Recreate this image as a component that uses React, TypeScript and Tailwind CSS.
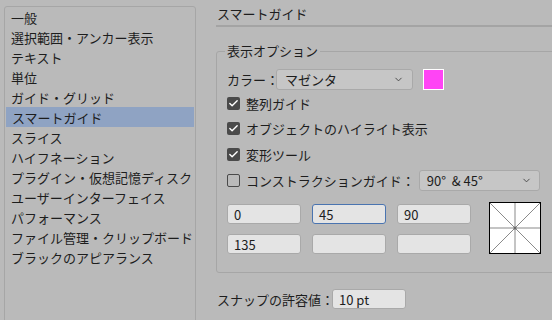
import { Check, ChevronDown } from "lucide-react";

const sections = [
  "一般",
  "選択範囲・アンカー表示",
  "テキスト",
  "単位",
  "ガイド・グリッド",
  "スマートガイド",
  "スライス",
  "ハイフネーション",
  "プラグイン・仮想記憶ディスク",
  "ユーザーインターフェイス",
  "パフォーマンス",
  "ファイル管理・クリップボード",
  "ブラックのアピアランス",
];

function Box({ checked }: { checked: boolean }) {
  return (
    <span
      className={`flex h-[13px] w-[13px] items-center justify-center rounded-[2px] ${
        checked ? "bg-[#4a4a4a]" : "border border-[#4a4a4a] bg-transparent"
      }`}
    >
      {checked && <Check size={11} strokeWidth={3} className="text-white" />}
    </span>
  );
}

function Field({ value, focused }: { value?: string; focused?: boolean }) {
  return (
    <div
      className={`flex h-[20px] w-[74px] items-center rounded-[3px] bg-[#e4e4e4] px-[6px] text-[13px] ${
        focused ? "border border-[#4a74b0]" : "border border-[#a9a9a9]"
      }`}
    >
      {value}
    </div>
  );
}

export default function App() {
  const font = { fontFamily: '"Noto Sans CJK JP", "Noto Sans", sans-serif' };
  return (
    <div
      className="flex h-[320px] w-[552px] overflow-hidden bg-[#bababa] text-[13px] leading-none text-[#1d1d1d]"
      style={font}
    >
      {/* sidebar list */}
      <div className="ml-[4px] mt-[6px] h-[330px] w-[192px] rounded-[3px] border border-[#a6a6a6]">
        {sections.map((s) => (
          <div
            key={s}
            className={`flex h-[20px] items-center pl-[6px] ${
              s === "スマートガイド" ? "mx-[1px] bg-[#8fa3c3] pl-[5px]" : ""
            }`}
          >
            {s}
          </div>
        ))}
      </div>

      <div className="ml-[20px] flex flex-1 flex-col">
        <div className="mt-[7px] border-b-2 border-[#a4a4a4] pb-[5px] pl-[1px]">スマートガイド</div>

        {/* display options group */}
        <div className="relative mt-[24px] -mr-[10px] h-[222px] rounded-[3px] border border-[#a6a6a6] pl-[10px] pt-[17px]">
          <span className="absolute -top-[8px] left-[8px] bg-[#bababa] px-[2px]">表示オプション</span>

          <div className="flex items-center">
            <span>カラー：</span>
            <div className="ml-[-3px] flex h-[21px] w-[137px] items-center justify-between rounded-[3px] border border-[#a9a9a9] bg-[#c6c6c6] pl-[8px] pr-[8px]">
              <span>マゼンタ</span>
              <ChevronDown size={11} strokeWidth={2} className="text-[#444]" />
            </div>
            <div className="ml-[10px] h-[21px] w-[21px] border-[1.5px] border-white bg-[#ff44f5]" />
          </div>

          <div className="mt-[7px] flex items-center gap-[6px]">
            <Box checked />
            <span>整列ガイド</span>
          </div>
          <div className="mt-[12px] flex items-center gap-[6px]">
            <Box checked />
            <span>オブジェクトのハイライト表示</span>
          </div>
          <div className="mt-[13px] flex items-center gap-[6px]">
            <Box checked />
            <span>変形ツール</span>
          </div>

          <div className="mt-[9px] flex items-center">
            <Box checked={false} />
            <span className="ml-[6px]">コンストラクションガイド：</span>
            <div className="ml-[4px] flex h-[21px] w-[121px] items-center justify-between rounded-[3px] border border-[#a9a9a9] bg-[#c6c6c6] pl-[7px] pr-[7px]">
              <span>90° &nbsp;&amp; 45°</span>
              <ChevronDown size={11} strokeWidth={2} className="text-[#444]" />
            </div>
          </div>

          <div className="mt-[13px] flex">
            <div className="flex flex-col gap-[10px]">
              <div className="flex gap-[11px]">
                <Field value="0" />
                <Field value="45" focused />
                <Field value="90" />
              </div>
              <div className="flex gap-[11px]">
                <Field value="135" />
                <Field />
                <Field />
              </div>
            </div>
            <svg width="52" height="52" viewBox="0 0 52 52" className="ml-[18px] -mt-[2px]">
              <rect x="0.5" y="0.5" width="51" height="51" fill="#fff" stroke="#000" />
              <line x1="26" y1="1" x2="26" y2="51" stroke="#c4c4c4" strokeWidth="2" />
              <line x1="1" y1="26" x2="51" y2="26" stroke="#c4c4c4" strokeWidth="2" />
              <line x1="1" y1="1" x2="51" y2="51" stroke="#8a8a8a" strokeWidth="1" />
              <line x1="51" y1="1" x2="1" y2="51" stroke="#8a8a8a" strokeWidth="1" />
              <circle cx="26" cy="26" r="1.5" fill="#666" />
            </svg>
          </div>
        </div>

        <div className="mt-[16px] flex items-center pl-[1px]">
          <span>スナップの許容値：</span>
          <div className="ml-[-2px] flex h-[20px] w-[74px] items-center rounded-[3px] border border-[#a9a9a9] bg-[#e4e4e4] px-[6px]">
            10 pt
          </div>
        </div>
      </div>
    </div>
  );
}
